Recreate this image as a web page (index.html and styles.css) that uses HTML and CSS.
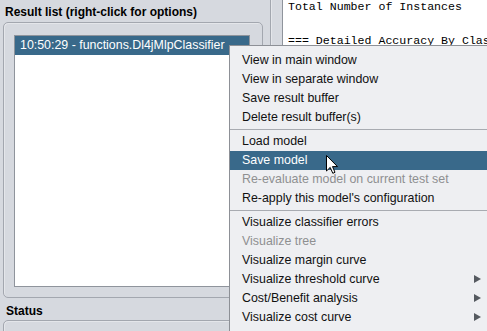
FILE: index.html
```html
<!DOCTYPE html>
<html>
<head>
<meta charset="utf-8">
<link rel="stylesheet" href="styles.css">
</head>
<body>
<div class="app">
  <div class="left">
    <div class="title">Result list (right-click for options)</div>
    <div class="box results">
      <div class="list">
        <div class="row sel">10:50:29 - functions.Dl4jMlpClassifier</div>
      </div>
    </div>
    <div class="title status-title">Status</div>
    <div class="box status"></div>
  </div>
  <div class="right">
    <div class="box outbox">
      <div class="output"><pre class="mono">Total Number of Instances              150

=== Detailed Accuracy By Class ===</pre></div>
    </div>
  </div>
</div>

<div class="menu">
  <div class="item">View in main window</div>
  <div class="item">View in separate window</div>
  <div class="item">Save result buffer</div>
  <div class="item">Delete result buffer(s)</div>
  <div class="sep"></div>
  <div class="item">Load model</div>
  <div class="item active">Save model</div>
  <div class="item disabled">Re-evaluate model on current test set</div>
  <div class="item">Re-apply this model's configuration</div>
  <div class="sep"></div>
  <div class="item">Visualize classifier errors</div>
  <div class="item disabled">Visualize tree</div>
  <div class="item">Visualize margin curve</div>
  <div class="item sub">Visualize threshold curve<span class="arrow"></span></div>
  <div class="item sub">Cost/Benefit analysis<span class="arrow"></span></div>
  <div class="item sub">Visualize cost curve<span class="arrow"></span></div>
</div>

<svg class="cursor" width="13" height="20" viewBox="0 0 13 20">
  <path d="M0.5 0.5 L0.5 16 L4.2 12.4 L6.8 18.3 L9 17.3 L6.5 11.6 L11.5 11.6 Z" fill="#fff" stroke="#000" stroke-width="1" stroke-linejoin="miter"/>
</svg>
</body>
</html>
```

FILE: styles.css
```css
* { box-sizing: border-box; }
html, body {
  margin: 0;
  padding: 0;
  width: 487px;
  height: 331px;
  overflow: hidden;
  background: #d6d9df;
  font-family: "Liberation Sans", Arial, sans-serif;
  font-size: 12px;
  color: #000;
}
.app {
  display: flex;
  height: 331px;
  overflow: hidden;
}
.left {
  width: 263px;
  padding-left: 3px;
  flex: none;
  display: flex;
  flex-direction: column;
}
.left > * {
  flex: none;
}
.title {
  font-weight: bold;
  line-height: 15px;
  height: 15px;
  padding-left: 2px;
  margin-top: 5px;
  color: #000;
}
.box {
  border: 1px solid #a3a7af;
  border-radius: 5px;
  box-shadow: inset 1px 1px 0 #e4e6ea;
}
.results {
  margin-top: 2px;
  height: 276px;
  padding: 12px 12px 10px 10px;
}
.list {
  height: 100%;
  background: #fff;
  border: 1px solid #8f949c;
}
.row {
  height: 19px;
  line-height: 19px;
  padding-left: 5px;
  font-size: 12.4px;
  white-space: nowrap;
}
.sel {
  background: #39698a;
  color: #fff;
}
.status-title {
  margin-top: 6px;
  padding-left: 3px;
}
.status {
  margin-top: 1px;
  height: 40px;
}
.right {
  flex: 1;
  padding-left: 7px;
}
.outbox {
  margin-top: -20px;
  height: 400px;
  padding-left: 11px;
  border-right: none;
  border-radius: 5px 0 0 5px;
}
.output {
  height: 100%;
  background: #fff;
  border: 1px solid #8f949c;
  border-right: none;
  padding: 16px 0 0 5px;
  overflow: hidden;
}
.mono {
  margin: 0;
  font-family: "Liberation Mono", "Courier New", monospace;
  font-size: 11.6px;
  line-height: 17px;
  color: #000;
  white-space: pre;
}
.menu {
  position: absolute;
  left: 229px;
  top: 45px;
  width: 262px;
  background: #eeeff2;
  border: 1px solid #8d9096;
  padding: 5px 0;
}
.item {
  position: relative;
  height: 19px;
  line-height: 19px;
  padding-left: 12px;
  font-size: 12.4px;
  white-space: nowrap;
  color: #111;
}
.item.active {
  background: #39698a;
  color: #fff;
}
.item.disabled {
  color: #8e8f91;
}
.arrow {
  position: absolute;
  left: 244px;
  top: 5px;
  width: 0;
  height: 0;
  border-top: 4px solid transparent;
  border-bottom: 4px solid transparent;
  border-left: 7px solid #555a60;
}
.sep {
  height: 5px;
  padding-top: 2px;
}
.sep::before {
  content: "";
  display: block;
  height: 1px;
  background: #a8abb1;
}
.cursor {
  position: absolute;
  left: 326px;
  top: 155px;
}
```
